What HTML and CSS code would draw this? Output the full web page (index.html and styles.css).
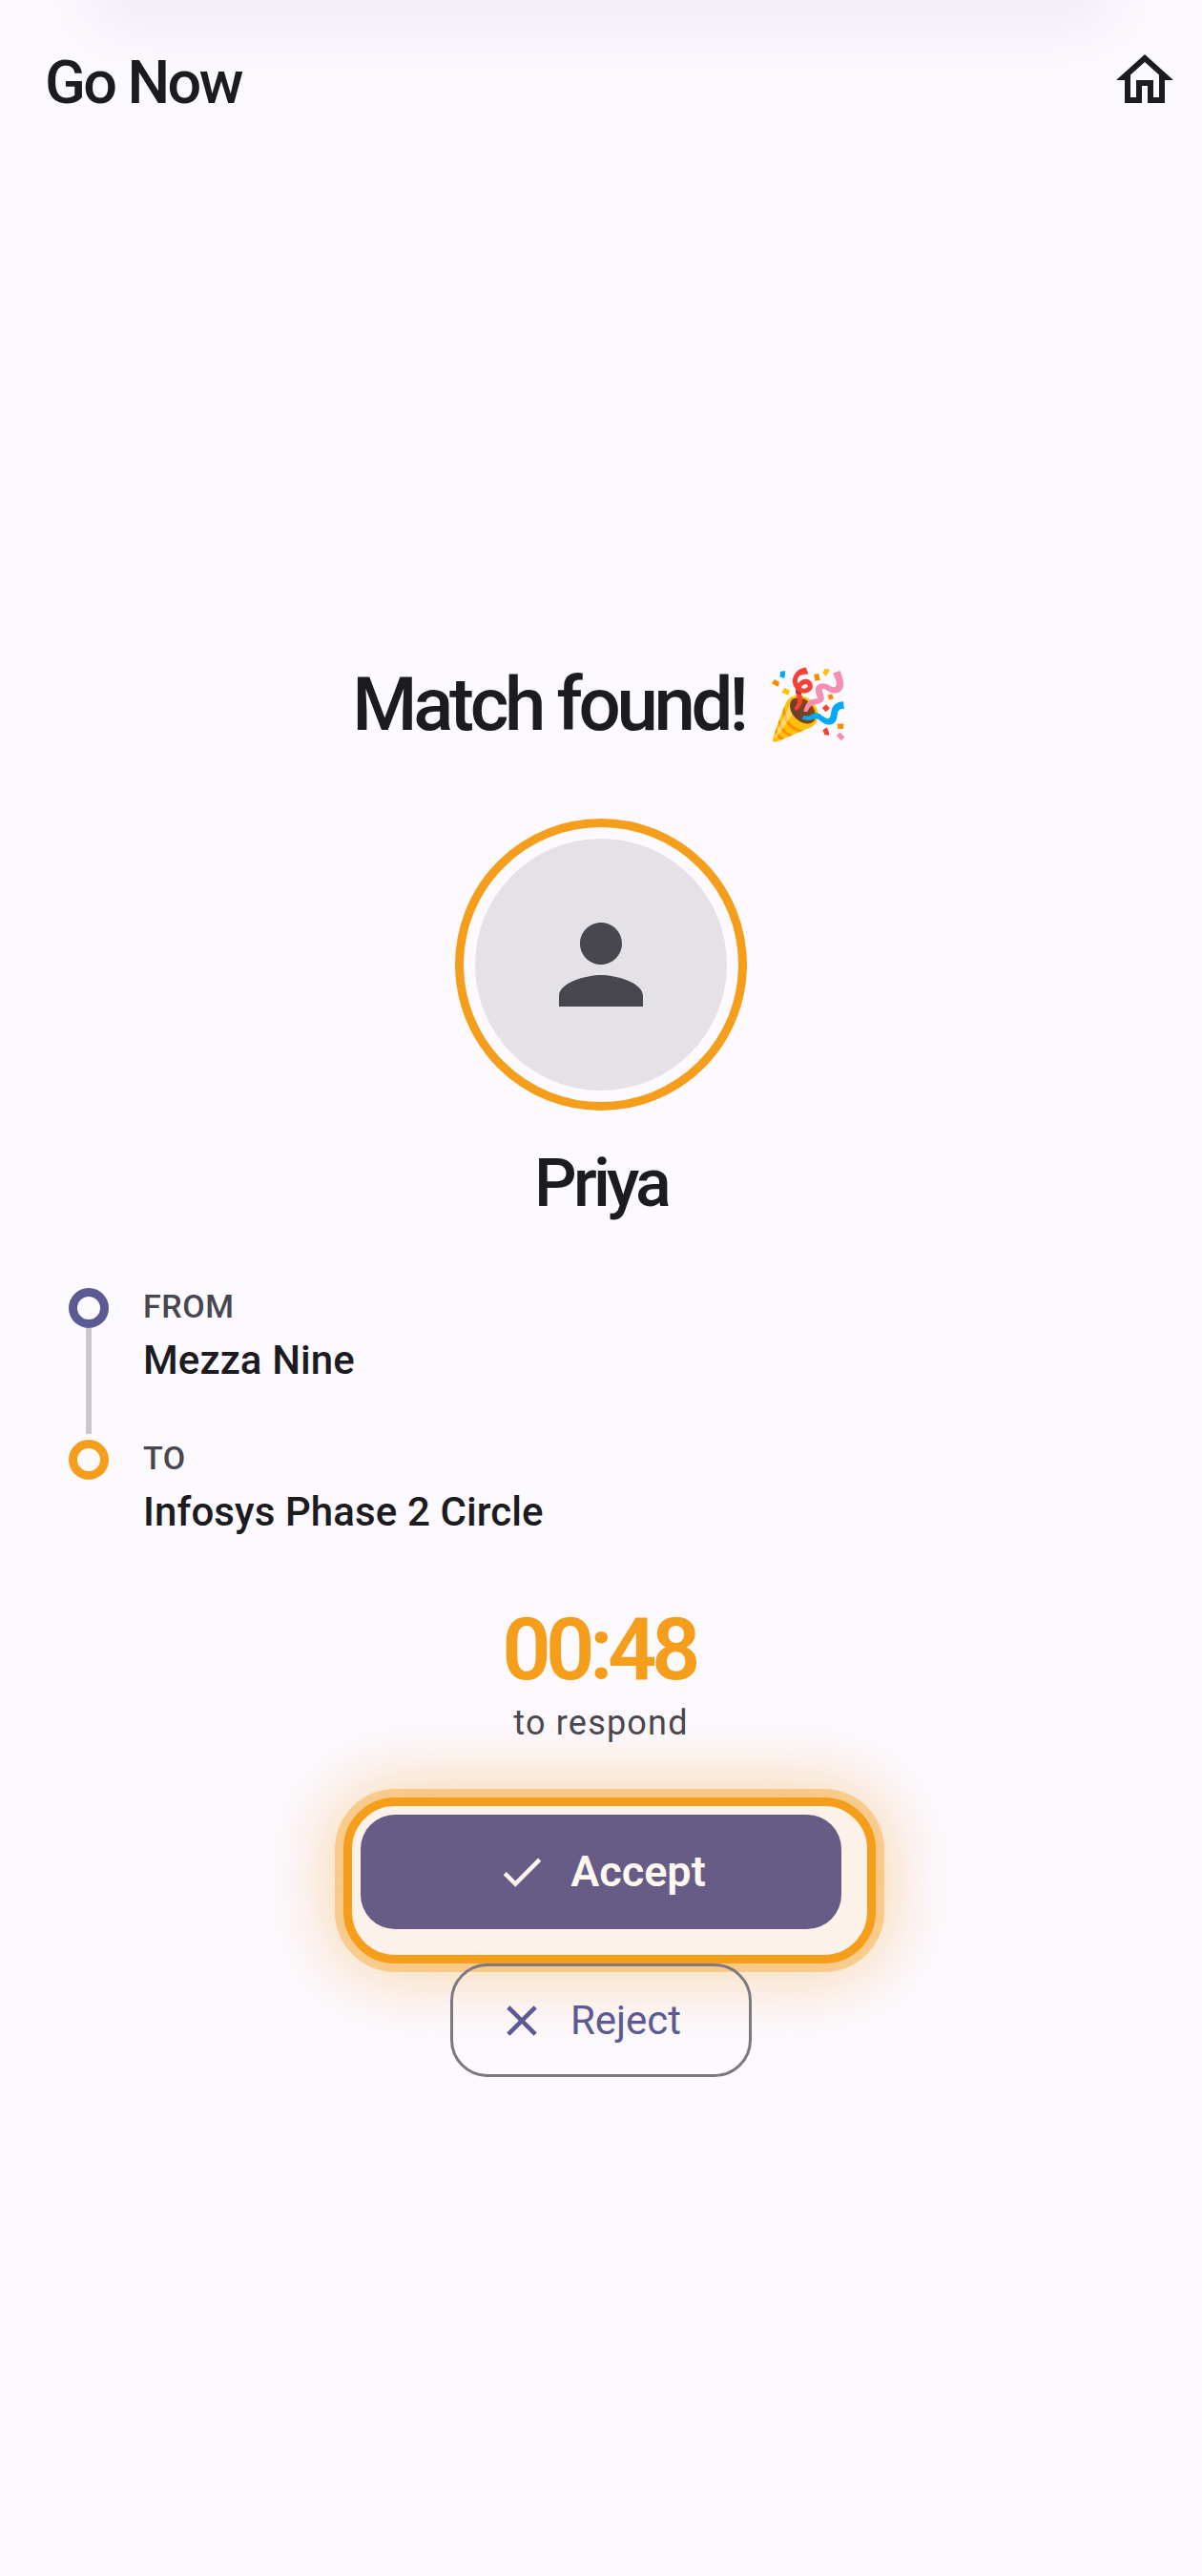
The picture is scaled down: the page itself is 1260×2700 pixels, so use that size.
FILE: index.html
```html
<!DOCTYPE html>
<html lang="en">
<head>
    <meta charset="UTF-8">
    <meta name="viewport" content="width=device-width, initial-scale=1.0">
    <title>Go Now</title>
    <link rel="stylesheet" href="styles.css">
</head>
<body>
    <div class="top-shade"></div>
    <div id="screen">
        <header class="app-bar">
            <div class="app-title">Go Now</div>
            <svg class="home-icon" viewBox="0 0 24 24"><path d="M12 5.69l5 4.5V18h-2v-6H9v6H7v-7.81l5-4.5M12 3L2 12h3v8h6v-6h2v6h6v-8h3L12 3z"/></svg>
        </header>

        <h1 class="match-title">Match found!<span class="emoji">🎉</span></h1>

        <div class="avatar-ring">
            <div class="avatar">
                <svg class="person-icon" viewBox="0 0 24 24"><path d="M12 12c2.21 0 4-1.79 4-4s-1.79-4-4-4-4 1.79-4 4 1.79 4 4 4zm0 2c-2.67 0-8 1.34-8 4v2h16v-2c0-2.66-5.33-4-8-4z"/></svg>
            </div>
        </div>
        <div class="name">Priya</div>

        <!-- Route -->
        <div class="route">
            <div class="stop">
                <div class="rail">
                    <span class="dot dot-from"></span>
                    <span class="line"></span>
                </div>
                <div class="stop-text">
                    <div class="stop-label">FROM</div>
                    <div class="stop-name">Mezza Nine</div>
                </div>
            </div>
            <div class="stop">
                <div class="rail">
                    <span class="dot dot-to"></span>
                </div>
                <div class="stop-text">
                    <div class="stop-label">TO</div>
                    <div class="stop-name">Infosys Phase 2 Circle</div>
                </div>
            </div>
        </div>

        <div class="timer">00:48</div>
        <div class="timer-note">to respond</div>

        <!-- Actions -->
        <div class="accept-ring">
            <button class="accept-btn">
                <svg class="btn-icon" viewBox="0 0 24 24"><path d="M9 16.17L4.83 12l-1.42 1.41L9 19 21 7l-1.41-1.41z"/></svg>
                Accept
            </button>
        </div>
        <button class="reject-btn">
            <svg class="btn-icon" viewBox="0 0 24 24"><path d="M19 6.41L17.59 5 12 10.59 6.41 5 5 6.41 10.59 12 5 17.59 6.41 19 12 13.41 17.59 19 19 17.59 13.41 12z"/></svg>
            Reject
        </button>
    </div>
</body>
</html>
```

FILE: styles.css
```css
body {
    margin: 0;
    height: 2700px;
    overflow: hidden;
    background-color: #fcf9ff;
    font-family: Roboto, "Liberation Sans", sans-serif;
    color: #1c1b1f;
}

.top-shade {
    position: absolute;
    top: -20px;
    left: 120px;
    width: 1020px;
    height: 20px;
    box-shadow: 0 0 70px 24px rgba(90, 80, 130, 0.09);
}

#screen {
    display: flex;
    flex-direction: column;
    align-items: center;
}

.app-bar {
    align-self: stretch;
    display: flex;
    justify-content: space-between;
    align-items: center;
    padding: 48px 24px 0 47px;
    height: 72px;
}

.app-title {
    margin-top: 5px;
    font-size: 63px;
    font-weight: 500;
    line-height: 78px;
    letter-spacing: -2.6px;
}

.home-icon {
    width: 72px;
    height: 72px;
    fill: #1c1b1f;
}

.match-title {
    display: flex;
    align-items: center;
    gap: 22px;
    margin: 565px 0 0;
    font-size: 78px;
    font-weight: 550;
    line-height: 108px;
    letter-spacing: -4.3px;
    white-space: nowrap;
}

.emoji {
    font-size: 71px;
    letter-spacing: 0;
}

.avatar-ring {
    margin-top: 65px;
    box-sizing: border-box;
    width: 306px;
    height: 306px;
    padding: 12px;
    border: 9px solid #f59e1b;
    border-radius: 50%;
}

.avatar {
    display: flex;
    justify-content: center;
    align-items: center;
    height: 100%;
    border-radius: 50%;
    background-color: #e4e1e7;
}

.person-icon {
    width: 132px;
    height: 132px;
    fill: #48464f;
}

.name {
    margin-top: 34px;
    font-size: 70px;
    font-weight: 550;
    line-height: 84px;
    letter-spacing: -3.8px;
}

.route {
    align-self: stretch;
    margin-top: 68px;
    padding-left: 72px;
}

.stop {
    display: flex;
    gap: 36px;
    height: 159px;
}

.rail {
    display: flex;
    flex-direction: column;
    align-items: center;
    width: 42px;
    padding-bottom: 6px;
}

.dot {
    box-sizing: border-box;
    flex: none;
    width: 42px;
    height: 42px;
    border: 9px solid;
    border-radius: 50%;
}

.dot-from {
    border-color: #5c5a92;
}

.dot-to {
    border-color: #f59e1b;
}

.line {
    flex: 1;
    width: 6px;
    background-color: #c9c6d0;
}

.stop-text {
    margin-top: -2px;
}

.stop-label {
    font-size: 34px;
    font-weight: 500;
    line-height: 42px;
    letter-spacing: 0.6px;
    color: #48464f;
}

.stop-name {
    margin-top: 12px;
    font-size: 42px;
    font-weight: 500;
    line-height: 48px;
    letter-spacing: 0.1px;
}

.timer {
    margin-top: 14px;
    padding-right: 5px;
    font-size: 90px;
    font-weight: 600;
    line-height: 96px;
    letter-spacing: -5.5px;
    color: #f59e1b;
}

.timer-note {
    margin-top: 4px;
    font-size: 36px;
    line-height: 48px;
    letter-spacing: 1.2px;
    color: #48464f;
}

.accept-ring {
    margin-top: 54px;
    margin-left: 18px;
    box-sizing: border-box;
    width: 558px;
    padding: 9px 27px 27px 9px;
    border: 9px solid #f59e1b;
    border-radius: 54px;
    background-color: #fcf2ea;
    box-shadow: 0 0 0 9px rgba(245, 158, 27, 0.38), 0 0 75px 12px rgba(245, 158, 27, 0.4);
}

.accept-btn,
.reject-btn {
    display: flex;
    justify-content: center;
    align-items: center;
    gap: 24px;
    font-family: inherit;
}

.accept-btn {
    width: 100%;
    height: 120px;
    padding-bottom: 2px;
    border: none;
    border-radius: 36px;
    background-color: #675c86;
    color: #fff8f0;
    font-size: 45px;
    font-weight: 600;
}

.reject-btn {
    position: relative;
    box-sizing: border-box;
    width: 316px;
    height: 119px;
    padding: 0 26px 0 0;
    border: 3px solid #7c7880;
    border-radius: 39px;
    background: transparent;
    color: #5c5a92;
    font-size: 42px;
}

.btn-icon {
    width: 54px;
    height: 54px;
    fill: currentColor;
}
```
